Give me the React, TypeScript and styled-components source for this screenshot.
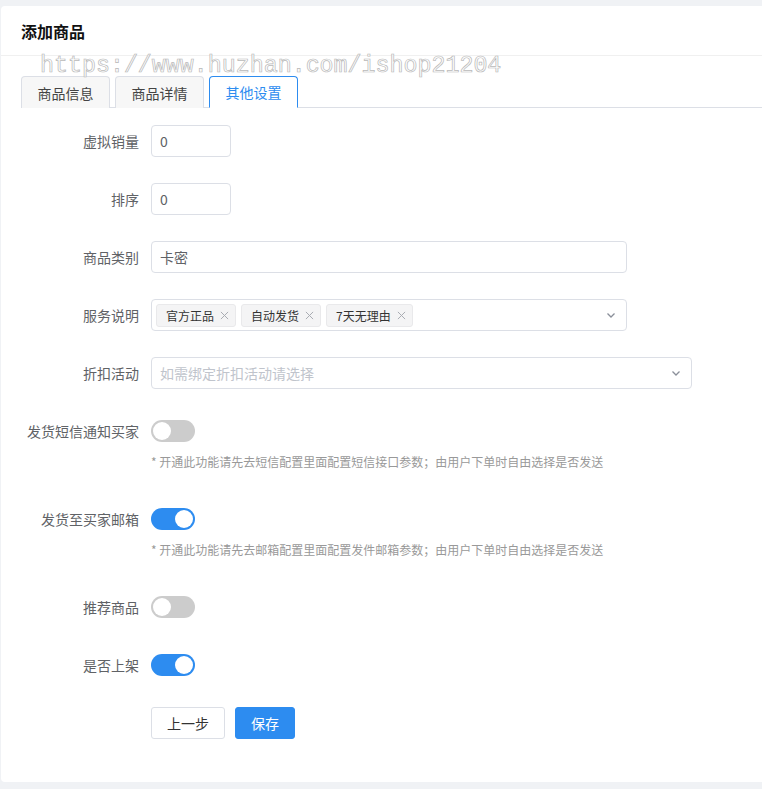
import React, { useState } from "react";
import styled, { createGlobalStyle } from "styled-components";

const Global = createGlobalStyle`
  html, body { margin: 0; padding: 0; background: #f0f2f5; }
  body { font-family: "Noto Sans CJK SC", "Noto Sans", "Liberation Sans", sans-serif; }
  * { box-sizing: border-box; }
`;

const Page = styled.div`
  padding: 6px 0 7px 1px;
  background: #f0f2f5;
`;

const Card = styled.div`
  position: relative;
  background: #fff;
  border-radius: 4px 0 0 4px;
  min-height: 776px;
`;

const Header = styled.div`
  height: 50px;
  padding: 0 20px 0;
  display: flex;
  align-items: center;
  border-bottom: 1px solid #f0f0f0;
`;

const Title = styled.h1`
  margin: 0;
  font-size: 16px;
  font-weight: 700;
  color: #111;
`;

const Watermark = styled.div`
  position: absolute;
  left: 39px;
  top: 45px;
  font-family: "Liberation Mono", "DejaVu Sans Mono", monospace;
  font-size: 23.3px;
  line-height: 30px;
  color: #fff;
  -webkit-text-stroke: 0.7px #b8b8b8;
  pointer-events: none;
  white-space: nowrap;
  z-index: 2;
`;

const Body = styled.div`
  padding: 20px 0 20px 20px;
`;

const TabBar = styled.div`
  display: flex;
  gap: 5px;
  height: 32px;
  border-bottom: 1px solid #dcdfe6;
`;

const Tab = styled.div<{ $active?: boolean }>`
  width: 89px;
  height: 32px;
  display: flex;
  align-items: center;
  justify-content: center;
  font-size: 14px;
  border: 1px solid ${(p) => (p.$active ? "#2d8cf0" : "#dcdfe6")};
  border-bottom: ${(p) => (p.$active ? "1px solid #fff" : "none")};
  border-radius: 4px 4px 0 0;
  background: ${(p) => (p.$active ? "#fff" : "#f7f7f7")};
  color: ${(p) => (p.$active ? "#2d8cf0" : "#444")};
`;

const Form = styled.div`
  margin-top: 17px;
`;

const Item = styled.div<{ $last?: boolean }>`
  margin-bottom: ${(p) => (p.$last ? "23px" : "26px")};
`;

const Row = styled.div`
  display: flex;
  align-items: center;
  min-height: 32px;
`;

const Label = styled.label`
  width: 130px;
  padding-right: 12px;
  text-align: right;
  font-size: 14px;
  color: #606266;
  flex-shrink: 0;
  white-space: nowrap;
`;

const Input = styled.div<{ $w: number }>`
  width: ${(p) => p.$w}px;
  height: 32px;
  border: 1px solid #dcdfe6;
  border-radius: 4px;
  padding: 0 8px;
  display: flex;
  align-items: center;
  font-size: 14px;
  color: #606266;
`;

const Select = styled.div<{ $w: number }>`
  width: ${(p) => p.$w}px;
  height: 32px;
  border: 1px solid #dcdfe6;
  border-radius: 4px;
  padding: 0 10px 0 4px;
  display: flex;
  align-items: center;
  gap: 5px;
`;

const Placeholder = styled.span`
  flex: 1;
  padding-left: 4px;
  font-size: 14px;
  color: #c0c4cc;
`;

const Tag = styled.span`
  height: 23px;
  display: inline-flex;
  align-items: center;
  gap: 6px;
  padding: 0 5px 0 9px;
  background: #f4f4f5;
  border: 1px solid #e9e9eb;
  border-radius: 3px;
  font-size: 12px;
  color: #333;
`;

const Close = styled.svg`
  width: 9px;
  height: 9px;
  margin-right: 1px;
`;

const Spacer = styled.span`
  flex: 1;
`;

const Chevron = styled.svg`
  width: 10px;
  height: 10px;
`;

const SwitchTrack = styled.button<{ $on: boolean }>`
  position: relative;
  width: 44px;
  height: 22px;
  border: none;
  padding: 0;
  border-radius: 11px;
  background: ${(p) => (p.$on ? "#2d8cf0" : "#cccccc")};
  cursor: pointer;
`;

const Knob = styled.span<{ $on: boolean }>`
  position: absolute;
  top: 2px;
  left: ${(p) => (p.$on ? "24px" : "2px")};
  width: 18px;
  height: 18px;
  border-radius: 50%;
  background: #fff;
`;

const Hint = styled.div`
  margin-left: 130px;
  height: 30px;
  line-height: 30px;
  font-size: 12px;
  color: #999;
`;

const Actions = styled.div`
  display: flex;
  gap: 10px;
  margin-left: 130px;
`;

const Button = styled.button<{ $primary?: boolean }>`
  height: 32px;
  padding: 0 15px;
  border-radius: 3px;
  font-family: inherit;
  font-size: 14px;
  border: 1px solid ${(p) => (p.$primary ? "#2d8cf0" : "#dcdfe6")};
  background: ${(p) => (p.$primary ? "#2d8cf0" : "#fff")};
  color: ${(p) => (p.$primary ? "#fff" : "#333")};
  min-width: ${(p) => (p.$primary ? "60px" : "74px")};
`;

const X = () => (
  <Close viewBox="0 0 10 10">
    <path d="M1 1L9 9M9 1L1 9" stroke="#a8abb2" strokeWidth="1.1" fill="none" />
  </Close>
);

const Down = () => (
  <Chevron viewBox="0 0 10 10">
    <path d="M1.5 3.5L5 7L8.5 3.5" stroke="#8a8f99" strokeWidth="1.3" fill="none" />
  </Chevron>
);

const Switch = ({ on }: { on: boolean }) => {
  const [v, setV] = useState(on);
  return (
    <SwitchTrack $on={v} onClick={() => setV(!v)}>
      <Knob $on={v} />
    </SwitchTrack>
  );
};

export default function App() {
  return (
    <>
      <Global />
      <Page>
        <Card>
          <Header>
            <Title>添加商品</Title>
          </Header>
          <Watermark>https://www.huzhan.com/ishop21204</Watermark>
          <Body>
            <TabBar>
              <Tab>商品信息</Tab>
              <Tab>商品详情</Tab>
              <Tab $active>其他设置</Tab>
            </TabBar>
            <Form>
              <Item>
                <Row>
                  <Label>虚拟销量</Label>
                  <Input $w={80}>0</Input>
                </Row>
              </Item>
              <Item>
                <Row>
                  <Label>排序</Label>
                  <Input $w={80}>0</Input>
                </Row>
              </Item>
              <Item>
                <Row>
                  <Label>商品类别</Label>
                  <Input $w={476}>卡密</Input>
                </Row>
              </Item>
              <Item>
                <Row>
                  <Label>服务说明</Label>
                  <Select $w={476}>
                    <Tag>官方正品<X /></Tag>
                    <Tag>自动发货<X /></Tag>
                    <Tag>7天无理由<X /></Tag>
                    <Spacer />
                    <Down />
                  </Select>
                </Row>
              </Item>
              <Item>
                <Row>
                  <Label>折扣活动</Label>
                  <Select $w={541}>
                    <Placeholder>如需绑定折扣活动请选择</Placeholder>
                    <Down />
                  </Select>
                </Row>
              </Item>
              <Item>
                <Row>
                  <Label>发货短信通知买家</Label>
                  <Switch on={false} />
                </Row>
                <Hint>* 开通此功能请先去短信配置里面配置短信接口参数；由用户下单时自由选择是否发送</Hint>
              </Item>
              <Item>
                <Row>
                  <Label>发货至买家邮箱</Label>
                  <Switch on={true} />
                </Row>
                <Hint>* 开通此功能请先去邮箱配置里面配置发件邮箱参数；由用户下单时自由选择是否发送</Hint>
              </Item>
              <Item>
                <Row>
                  <Label>推荐商品</Label>
                  <Switch on={false} />
                </Row>
              </Item>
              <Item>
                <Row>
                  <Label>是否上架</Label>
                  <Switch on={true} />
                </Row>
              </Item>
              <Item $last>
                <Actions>
                  <Button>上一步</Button>
                  <Button $primary>保存</Button>
                </Actions>
              </Item>
            </Form>
          </Body>
        </Card>
      </Page>
    </>
  );
}
